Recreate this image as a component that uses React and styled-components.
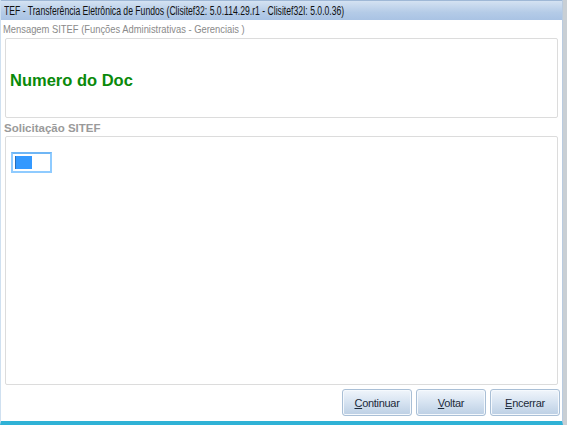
import styled, { createGlobalStyle } from "styled-components"

const GlobalStyle = createGlobalStyle`
  html, body {
    margin: 0;
    padding: 0;
  }
  body {
    width: 567px;
    height: 425px;
    overflow: hidden;
    background: linear-gradient(to right, #1d3a48 0, #1d3a48 3px, #c9cfd4 3px);
    font-family: "Liberation Sans", Arial, sans-serif;
  }
`

const Window = styled.div`
  width: 563px;
  height: 425px;
  box-sizing: border-box;
  background: #fff;
  border-left: 1px solid #cfe0f0;
  border-right: 1px solid #b9cbe0;
  border-bottom: 4px solid #2fb2d6;
  display: flex;
  flex-direction: column;
`

const TitleBar = styled.div`
  height: 20px;
  flex: none;
  display: flex;
  align-items: center;
  padding-left: 3px;
  background: linear-gradient(#d4e2f2, #b4cbe7 60%, #a9c3e4);
  border-top: 1px solid #9fb8d6;
  box-sizing: border-box;
  font-size: 12.5px;
  color: #111;
  white-space: nowrap;
`

// narrow system font look: the original UI font is much narrower than Arial
const Squeeze = styled.span`
  display: inline-block;
  white-space: nowrap;
  transform: scaleX(${(p) => p.$scale});
  transform-origin: left center;
`

const Body = styled.div`
  flex: 1;
  display: flex;
  flex-direction: column;
  padding: 2px 4px 0 4px;
`

const Caption = styled.div`
  font-size: 11.5px;
  color: #8a8a8a;
  height: 16px;
  line-height: 14px;
  margin-left: -2px;
`

const Panel = styled.div`
  border: 1px solid #dcdcdc;
  border-radius: 2px;
  box-sizing: border-box;
  background: #fff;
  display: flex;
  flex-direction: ${(p) => (p.$grow ? "column" : "row")};
  flex: ${(p) => (p.$grow ? 1 : "none")};
  height: ${(p) => (p.$grow ? "auto" : "80px")};
  align-items: ${(p) => (p.$grow ? "flex-start" : "center")};
  padding: ${(p) => (p.$grow ? "15px 5px" : "0 4px")};
`

const Message = styled.div`
  font-size: 16.5px;
  font-weight: bold;
  color: #0a8a0a;
  padding-top: 5px;
`

const SectionLabel = styled.div`
  font-size: 11.5px;
  font-weight: bold;
  color: #9a9a9a;
  height: 18px;
  line-height: 20px;
  margin-left: -1px;
`

const InputBox = styled.div`
  width: 41px;
  height: 21px;
  box-sizing: border-box;
  border: 2px solid #8fcbff;
  border-top-color: #6fb6f5;
  padding: 2px;
  display: flex;
  background: #fff;
`

const Caret = styled.div`
  width: 16px;
  height: 13px;
  background: #3399ff;
  border-left: 1px solid #2a6fb8;
`

const ButtonRow = styled.div`
  display: flex;
  justify-content: flex-end;
  gap: 4px;
  padding: 4px 0 5px 0;
  margin-right: -2px;
`

const Button = styled.button`
  width: 70px;
  height: 27px;
  border: 1px solid #a9bfd6;
  border-radius: 3px;
  background: linear-gradient(#f0f5fb, #d6e3f1 50%, #bccfe4);
  font-family: "Liberation Sans", Arial, sans-serif;
  font-size: 11px;
  letter-spacing: -0.3px;
  color: #1c2a3a;
  padding: 0;
  box-shadow: inset 0 0 0 1px #f5f9fd;

  u {
    text-decoration: underline;
  }
`

const buttons = [
  { key: "C", rest: "ontinuar" },
  { key: "V", rest: "oltar" },
  { key: "E", rest: "ncerrar" },
]

const App = () => {
  return (
    <>
      <GlobalStyle />
      <Window>
        <TitleBar>
          <Squeeze $scale={0.69}>
            TEF - Transferência Eletrônica de Fundos (Clisitef32: 5.0.114.29.r1 - Clisitef32I: 5.0.0.36)
          </Squeeze>
        </TitleBar>
        <Body>
          <Caption>
            <Squeeze $scale={0.815}>Mensagem SITEF (Funções Administrativas - Gerenciais )</Squeeze>
          </Caption>
          <Panel>
            <Message>Numero do Doc</Message>
          </Panel>
          <SectionLabel>Solicitação SITEF</SectionLabel>
          <Panel $grow>
            <InputBox>
              <Caret />
            </InputBox>
          </Panel>
          <ButtonRow>
            {buttons.map((b) => (
              <Button key={b.key}>
                <u>{b.key}</u>
                {b.rest}
              </Button>
            ))}
          </ButtonRow>
        </Body>
      </Window>
    </>
  )
}

export default App
